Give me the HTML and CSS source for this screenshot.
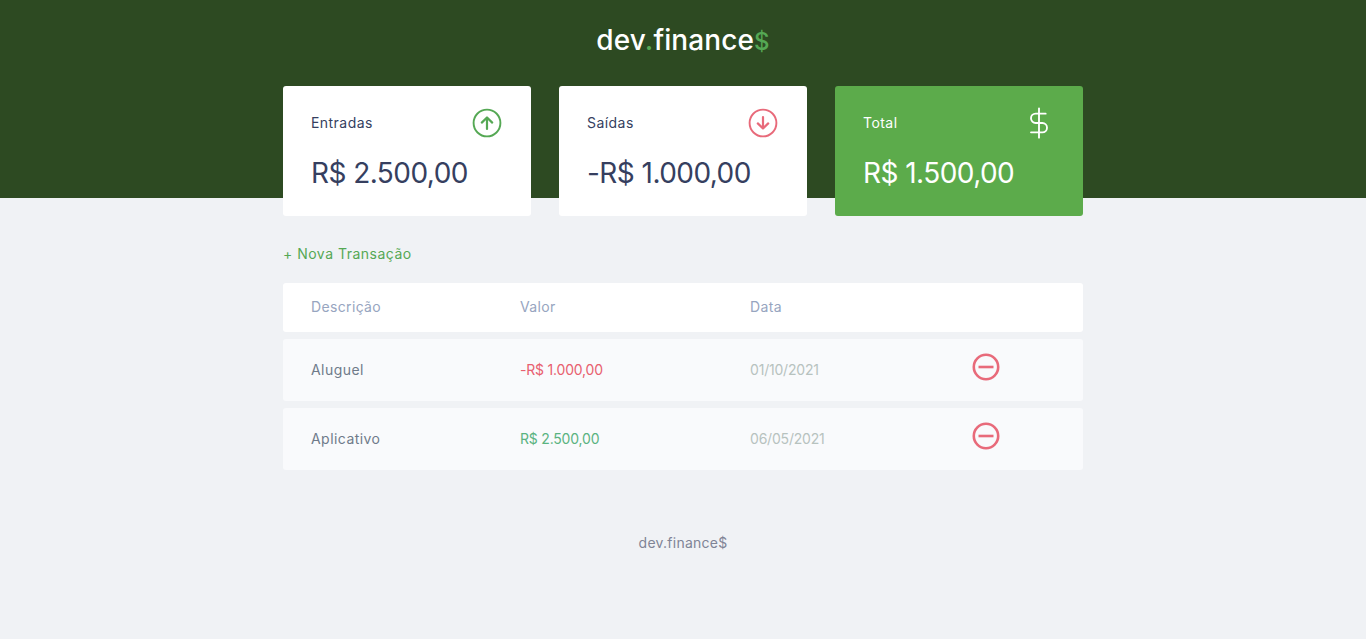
FILE: index.html
```html
<!DOCTYPE html>
<html lang="pt-BR">
<head>
    <meta charset="UTF-8">
    <meta name="viewport" content="width=device-width, initial-scale=1.0">
    <title>dev.finance$</title>
    <link rel="stylesheet" href="styles.css">
</head>
<body>
    <header class="header">
        <h1 class="logo">dev<span class="logo-green">.</span>finance<span class="logo-green logo-dollar">$</span></h1>
    </header>

    <main class="container">
        <section class="balance">
            <div class="card">
                <div class="card-top">
                    <span class="card-label">Entradas</span>
                    <svg class="card-icon" viewBox="0 0 32 32" fill="none" stroke="#55a854">
                        <circle cx="16" cy="16" r="13.4" stroke-width="1.9"/>
                        <path d="M16 22V10.5M10.8 15.6L16 10.5l5.2 5.1" stroke-width="2.2" stroke-linecap="round" stroke-linejoin="round"/>
                    </svg>
                </div>
                <h3 class="card-value">R$ 2.500,00</h3>
            </div>
            <div class="card">
                <div class="card-top">
                    <span class="card-label">Saídas</span>
                    <svg class="card-icon" viewBox="0 0 32 32" fill="none" stroke="#e86a7a">
                        <circle cx="16" cy="16" r="13.4" stroke-width="1.9"/>
                        <path d="M16 10v11.5M10.8 16.4l5.2 5.1 5.2-5.1" stroke-width="2.2" stroke-linecap="round" stroke-linejoin="round"/>
                    </svg>
                </div>
                <h3 class="card-value">-R$ 1.000,00</h3>
            </div>
            <div class="card card-total">
                <div class="card-top">
                    <span class="card-label">Total</span>
                    <svg class="card-icon" viewBox="0 0 24 24" fill="none" stroke="#ffffff" stroke-width="1.4" stroke-linecap="round" stroke-linejoin="round">
                        <path d="M12 1v22"/>
                        <path d="M17 5H9.5a3.5 3.5 0 0 0 0 7h5a3.5 3.5 0 0 1 0 7H6"/>
                    </svg>
                </div>
                <h3 class="card-value">R$ 1.500,00</h3>
            </div>
        </section>

        <a href="#" class="new-link">+ Nova Transação</a>

        <table class="transactions">
            <colgroup>
                <col class="col-desc">
                <col class="col-value">
                <col class="col-date">
                <col>
            </colgroup>
            <thead>
                <tr>
                    <th>Descrição</th>
                    <th>Valor</th>
                    <th>Data</th>
                    <th></th>
                </tr>
            </thead>
            <tbody>
                <tr>
                    <td class="description">Aluguel</td>
                    <td class="expense">-R$ 1.000,00</td>
                    <td class="date">01/10/2021</td>
                    <td class="action">
                        <svg class="remove" viewBox="0 0 28 28" fill="none" stroke="#e86a7a" stroke-width="2.6">
                            <circle cx="14" cy="14" r="12.2"/>
                            <path d="M6.5 14h15"/>
                        </svg>
                    </td>
                </tr>
                <tr>
                    <td class="description">Aplicativo</td>
                    <td class="income">R$ 2.500,00</td>
                    <td class="date">06/05/2021</td>
                    <td class="action">
                        <svg class="remove" viewBox="0 0 28 28" fill="none" stroke="#e86a7a" stroke-width="2.6">
                            <circle cx="14" cy="14" r="12.2"/>
                            <path d="M6.5 14h15"/>
                        </svg>
                    </td>
                </tr>
            </tbody>
        </table>
    </main>

    <footer class="footer">dev.finance$</footer>
</body>
</html>
```

FILE: styles.css
```css
* {
    margin: 0;
    padding: 0;
    box-sizing: border-box;
}

html {
    font-size: 14px;
}

body {
    background-color: #f0f2f5;
    font-family: "Inter", "Liberation Sans", sans-serif;
    line-height: 21px;
    color: #363f5f;
}

.header {
    height: 198px;
    padding-top: 22px;
    background-color: #2d4a22;
    text-align: center;
}

.logo {
    font-size: 28px;
    line-height: 36px;
    font-weight: 500;
    color: #ffffff;
    letter-spacing: 0.1px;
}

.logo-green {
    color: #55a854;
}

.logo-dollar {
    font-size: 24px;
}

.container {
    width: 800px;
    margin: 0 auto;
}

.balance {
    display: grid;
    grid-template-columns: repeat(3, 1fr);
    gap: 28px;
    margin-top: -112px;
    margin-bottom: 27px;
}

.card {
    height: 130px;
    padding: 21px 28px;
    background-color: #ffffff;
    border-radius: 3px;
}

.card-total {
    background-color: #5cab4b;
    color: #ffffff;
}

.card-top {
    display: flex;
    align-items: center;
    justify-content: space-between;
    height: 32px;
    font-size: 14px;
}

/* Inter sits a pixel lower than the reference text */
.card-label {
    margin-bottom: 2px;
    letter-spacing: 0.45px;
}

.card-icon {
    width: 32px;
    height: 32px;
}

.card-value {
    margin-top: 13px;
    font-size: 28px;
    line-height: 42px;
    font-weight: 400;
    letter-spacing: -0.55px;
}

.new-link {
    display: block;
    margin-bottom: 12px;
    color: #55a854;
    text-decoration: none;
    letter-spacing: 0.5px;
}

.transactions {
    width: 100%;
    table-layout: fixed;
    border-collapse: separate;
    border-spacing: 0 7px;
}

.col-desc {
    width: 209px;
}

.col-value {
    width: 230px;
}

.col-date {
    width: 222px;
}

th {
    padding: 13px 28px 15px;
    background-color: #ffffff;
    font-weight: 400;
    text-align: left;
    color: #97a5c0;
    letter-spacing: 0.35px;
}

td {
    padding: 13px 28px 15px;
    background-color: #f9fafc;
}

th:first-child, td:first-child {
    border-radius: 3px 0 0 3px;
}

th:last-child, td:last-child {
    border-radius: 0 3px 3px 0;
}

.description {
    color: #6f7a8a;
    letter-spacing: 0.45px;
}

.expense {
    color: #e8606f;
    letter-spacing: -0.2px;
}

.income {
    color: #5bb381;
    letter-spacing: -0.2px;
}

.date {
    color: #b7c2bf;
    letter-spacing: -0.2px;
}

.action {
    padding: 14px 28px;
}

.remove {
    display: block;
    width: 28px;
    height: 28px;
    margin-bottom: 6px;
}

.footer {
    padding: 55px 0 57px;
    text-align: center;
    color: #7f8496;
    letter-spacing: 0.25px;
}
```
